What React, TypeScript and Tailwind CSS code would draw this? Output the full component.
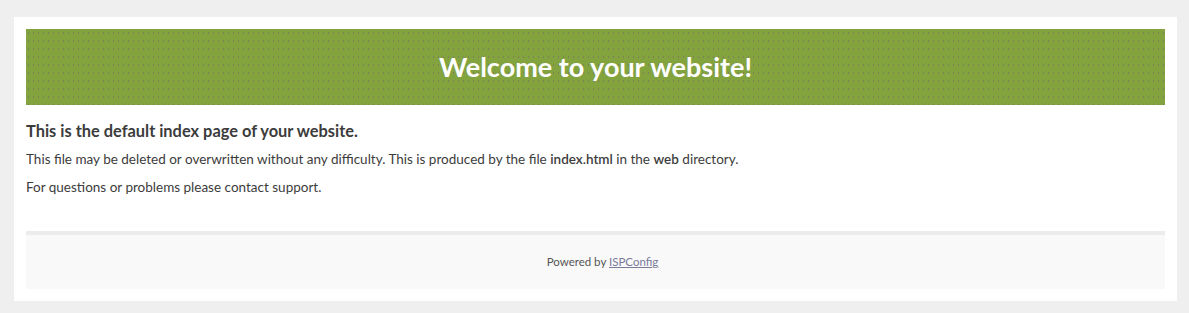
import React from "react";

export default function App() {
  return (
    <div className="min-h-screen bg-[#efefef] pl-[14px] pr-[12px] pt-[17px] pb-[12px] font-['Lato',sans-serif] text-[#3c3c3c]">
      <div className="bg-white px-[12px] pt-[12px] pb-[12px]">
        {/* Header band */}
        <div className="flex h-[76px] items-center justify-center bg-[#83a33f] bg-[radial-gradient(circle,rgba(120,90,120,0.45)_0.6px,transparent_0.8px)] bg-[length:5px_8px]">
          <h1 className="text-[27px] font-bold text-white">Welcome to your website!</h1>
        </div>

        {/* Body */}
        <div className="pt-[16px] pb-[35px]">
          <h2 className="text-[16.4px] font-bold leading-[20px]">This is the default index page of your website.</h2>
          <p className="mt-[9px] text-[13.5px] leading-[18px]">
            This file may be deleted or overwritten without any difficulty. This is produced by the file{" "}
            <b className="font-semibold">index.html</b> in the <b className="font-semibold">web</b> directory.
          </p>
          <p className="mt-[10px] text-[13.5px] leading-[18px]">For questions or problems please contact support.</p>
        </div>

        {/* Footer */}
        <div className="border-t-4 border-[#ececec] bg-[#f9f9f9] py-[20px] pl-[14px] text-center text-[11.5px] leading-[14px] text-[#555]">
          Powered by{" "}
          <a href="#" className="text-[#7a7a9a] underline">
            ISPConfig
          </a>
        </div>
      </div>
    </div>
  );
}
